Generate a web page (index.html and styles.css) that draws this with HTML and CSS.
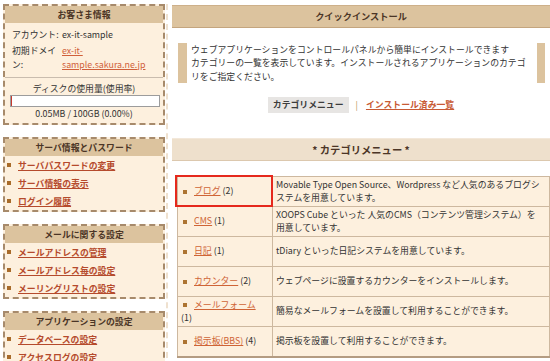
FILE: index.html
```html
<!DOCTYPE html>
<html lang="ja">
<head>
<meta charset="utf-8">
<title>クイックインストール</title>
<link rel="stylesheet" href="styles.css">
</head>
<body>
<div class="page">
  <aside class="sidebar">
    <section class="box">
      <h2 class="box-h">お客さま情報</h2>
      <div class="info">
        <dl class="acct">
          <dt>アカウント:</dt><dd>ex-it-sample</dd>
          <dt>初期ドメイン:</dt><dd><a class="plain-link" href="#">ex-it-sample.sakura.ne.jp</a></dd>
        </dl>
        <hr class="sep">
        <p class="disk-l">ディスクの使用量(使用率)</p>
        <div class="meter"><span class="meter-fill"></span></div>
        <p class="disk-v">0.05MB / 100GB (0.00%)</p>
      </div>
    </section>

    <section class="box">
      <h2 class="box-h">サーバ情報とパスワード</h2>
      <ul class="links">
        <li><span class="dot"></span><a href="#">サーバパスワードの変更</a></li>
        <li><span class="dot"></span><a href="#">サーバ情報の表示</a></li>
        <li><span class="dot"></span><a href="#">ログイン履歴</a></li>
      </ul>
    </section>

    <section class="box">
      <h2 class="box-h">メールに関する設定</h2>
      <ul class="links">
        <li><span class="dot"></span><a href="#">メールアドレスの管理</a></li>
        <li><span class="dot"></span><a href="#">メールアドレス毎の設定</a></li>
        <li><span class="dot"></span><a href="#">メーリングリストの設定</a></li>
      </ul>
    </section>

    <section class="box">
      <h2 class="box-h">アプリケーションの設定</h2>
      <ul class="links">
        <li><span class="dot"></span><a href="#">データベースの設定</a></li>
        <li><span class="dot"></span><a href="#">アクセスログの設定</a></li>
      </ul>
    </section>
  </aside>

  <main class="main">
    <h2 class="band">クイックインストール</h2>
    <blockquote class="note">ウェブアプリケーションをコントロールパネルから簡単にインストールできます<br>カテゴリーの一覧を表示しています。インストールされるアプリケーションのカテゴリをご指定ください。</blockquote>
    <nav class="tabs">
      <span class="tab-on">カテゴリメニュー</span>
      <span class="tab-sep">|</span>
      <a class="tab-link" href="#">インストール済み一覧</a>
    </nav>
    <h3 class="band band-sub">* カテゴリメニュー *</h3>
    <table class="cats">
      <tr>
        <td class="cat hl"><span class="dot"></span><a href="#">ブログ</a> (2)</td>
        <td class="desc">Movable Type Open Source、Wordpress など人気のあるブログシステムを用意しています。</td>
      </tr>
      <tr>
        <td class="cat"><span class="dot"></span><a href="#">CMS</a> (1)</td>
        <td class="desc">XOOPS Cube といった 人気のCMS（コンテンツ管理システム）を<br>用意しています。</td>
      </tr>
      <tr>
        <td class="cat"><span class="dot"></span><a href="#">日記</a> (1)</td>
        <td class="desc">tDiary といった日記システムを用意しています。</td>
      </tr>
      <tr>
        <td class="cat"><span class="dot"></span><a href="#">カウンター</a> (2)</td>
        <td class="desc">ウェブページに設置するカウンターをインストールします。</td>
      </tr>
      <tr>
        <td class="cat"><span class="dot"></span><a href="#">メールフォーム</a> (1)</td>
        <td class="desc">簡易なメールフォームを設置して利用することができます。</td>
      </tr>
      <tr>
        <td class="cat"><span class="dot"></span><a href="#">掲示板(BBS)</a> (4)</td>
        <td class="desc">掲示板を設置して利用することができます。</td>
      </tr>
    </table>
  </main>
</div>
</body>
</html>
```

FILE: styles.css
```css
html, body {
  margin: 0;
  padding: 0;
  overflow: hidden;
  background: #ffffff;
}

body {
  font-family: "Noto Sans CJK JP", "Noto Sans", sans-serif;
  font-size: 8.85px;
  line-height: 13.3px;
  color: #333333;
}

a {
  color: #c85a34;
  text-decoration: underline;
}

h2, h3, p, dl, dd, ul, blockquote {
  margin: 0;
  padding: 0;
}

.page {
  display: flex;
  align-items: flex-start;
  padding: 4px 0 0 3px;
}

/* ---------- sidebar ---------- */
.sidebar {
  width: 162px;
  flex: none;
  display: flex;
  flex-direction: column;
  gap: 12px;
}

.box {
  border: 2px dashed #a78a6b;
  background: #fdf0de;
}

.box-h {
  background: #dcc39e;
  height: 17px;
  line-height: 17px;
  text-align: center;
  font-size: 8.85px;
  font-weight: bold;
  color: #4b3526;
}

.info {
  padding: 5px 0 3px 0;
}

.acct {
  display: grid;
  grid-template-columns: 48px 1fr;
  column-gap: 2px;
  row-gap: 3px;
  padding: 0 4px 0 7px;
}

.acct dt {
  color: #333333;
}

.plain-link {
  color: #d0603a;
}

.sep {
  border: 0;
  border-top: 1px solid #c9bcae;
  margin: 6px 0 4px 0;
}

.disk-l, .disk-v {
  text-align: center;
}

.meter {
  height: 10px;
  margin: 0 3px 0 5px;
  border: 1px solid #9c9c9c;
  background: #ffffff;
  display: flex;
}

.meter-fill {
  width: 1px;
  background: #c83a2e;
}

.links {
  list-style: none;
}

.links li {
  display: flex;
  align-items: center;
  height: 18px;
  padding-left: 2px;
}

.links a {
  color: #b54a2c;
  font-weight: bold;
}

.dot {
  display: inline-block;
  width: 4px;
  height: 4px;
  background: #a86b2a;
  margin-right: 7px;
  flex: none;
}

/* ---------- main ---------- */
.main {
  flex: 1;
  min-width: 0;
  margin-left: 1px;
  border-left: 2px dashed #efe1cf;
  padding: 1px 0 10px 4px;
}

.band {
  background: #dcc39e;
  border-top: 1px solid #cdb08a;
  border-bottom: 1px solid #c4a57e;
  height: 21px;
  line-height: 21px;
  text-align: center;
  font-size: 9.2px;
  font-weight: bold;
  color: #4b3526;
}

.note {
  margin: 15px 5px 0 6px;
  border-left: 9px solid #dcc39e;
  border-right: 8px solid #dcc39e;
  padding: 0 4px;
  line-height: 13.4px;
}

.tabs {
  margin-top: 14px;
  display: flex;
  justify-content: center;
  align-items: center;
  font-weight: bold;
}

.tab-on {
  background: #e7e5e3;
  padding: 1px 5px;
  color: #3d3d3d;
}

.tab-sep {
  margin: 0 8px 0 7px;
  color: #b58a5c;
  font-weight: normal;
}

.tab-link {
  color: #c85a34;
}

.band-sub {
  margin-top: 25px;
  background: #eee0cc;
  border-top: 1px solid #f3e8da;
  border-bottom: 1px solid #dcc8ae;
  font-size: 10.3px;
  color: #4b3526;
}

.cats {
  margin: 15px 0 0 5px;
  width: calc(100% - 5px);
  border-collapse: collapse;
  background: #fdf0de;
  border: 1px solid #c2ac93;
  border-bottom: 2px solid #b49c82;
}

.cats td {
  border: 1px solid #cdb89f;
  height: 29px;
  vertical-align: middle;
  padding: 0 3px;
}

.cats .cat {
  width: 85px;
  padding-right: 6px;
}

.cats .cat a {
  color: #cf6436;
}

.cats .cat .dot {
  margin-left: 2px;
  margin-right: 7px;
  vertical-align: middle;
  background: #ad7431;
}

.cats .desc {
  padding-left: 3px;
  padding-right: 6px;
}

.hl {
  position: relative;
}

.hl::after {
  content: "";
  position: absolute;
  left: -3px;
  top: -2px;
  right: -1px;
  bottom: -1px;
  border: 2.5px solid #e5291d;
  pointer-events: none;
}
```
